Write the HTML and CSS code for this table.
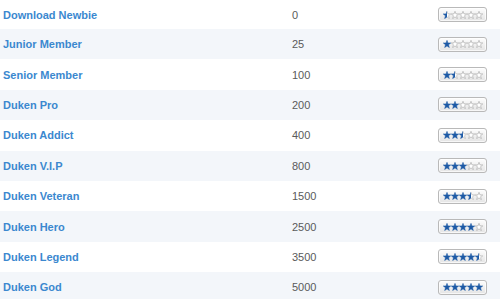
FILE: index.html
```html
<!DOCTYPE html>
<html>
<head>
<meta charset="utf-8">
<link rel="stylesheet" href="styles.css">
</head>
<body>
<svg class="defs" width="0" height="0" aria-hidden="true">
  <defs>
    <linearGradient id="halfFill" x1="0" x2="1" y1="0" y2="0">
      <stop offset="0.5" stop-color="#1d5aa6"/>
      <stop offset="0.5" stop-color="#ffffff"/>
    </linearGradient>
    <linearGradient id="halfStroke" x1="0" x2="1" y1="0" y2="0">
      <stop offset="0.5" stop-color="#1d5aa6"/>
      <stop offset="0.5" stop-color="#a9a9a9"/>
    </linearGradient>
    <symbol id="star" viewBox="0 0 10 10">
      <polygon points="5,0.4 6.2,3.6 9.7,3.7 6.95,5.9 7.95,9.5 5,7.4 2.05,9.5 3.05,5.9 0.3,3.7 3.8,3.6"/>
    </symbol>
  </defs>
</svg>
<table class="ranks">
  <tbody id="rows"></tbody>
</table>
<script src="script.js"></script>
</body>
</html>
```
FILE: styles.css
```css
html, body {
  margin: 0;
  padding: 0;
  background: #ffffff;
}
.defs {
  position: absolute;
  width: 0;
  height: 0;
}
.ranks {
  width: 500px;
  border-collapse: collapse;
  font-family: "Liberation Sans", Arial, sans-serif;
  font-size: 11px;
}
.ranks tr {
  height: 30.4px;
}
.ranks tr:first-child {
  height: 29px;
}
.ranks tr:nth-child(even) {
  background: #f3f6fa;
}
.ranks td {
  padding: 0;
  vertical-align: middle;
}
.name {
  width: 289px;
  padding-left: 3px !important;
  color: #3b88cf;
  font-weight: bold;
}
.posts {
  color: #5a5a5a;
  width: 146px;
}
.badge {
  display: flex;
  align-items: center;
  justify-content: center;
  width: 49px;
  height: 15px;
  box-sizing: border-box;
  border: 1px solid #b9b9b9;
  border-radius: 3px;
  background: linear-gradient(#fdfdfd, #e4e4e4);
  box-shadow: inset 0 0 0 1px rgba(255, 255, 255, 0.7);
}
.badge svg {
  width: 8px;
  height: 8px;
  display: block;
}
.full {
  fill: #1d5aa6;
  stroke: #1d5aa6;
  stroke-width: 0.6;
}
.empty {
  fill: #ffffff;
  stroke: #a9a9a9;
  stroke-width: 0.8;
}
.half {
  fill: url(#halfFill);
  stroke: url(#halfStroke);
  stroke-width: 0.7;
}
```
FILE: script.js
```js
var data = [
  ["Download Newbie", "0"],
  ["Junior Member", "25"],
  ["Senior Member", "100"],
  ["Duken Pro", "200"],
  ["Duken Addict", "400"],
  ["Duken V.I.P", "800"],
  ["Duken Veteran", "1500"],
  ["Duken Hero", "2500"],
  ["Duken Legend", "3500"],
  ["Duken God", "5000"]
];
var tbody = document.getElementById("rows");
data.forEach(function (d, i) {
  var rating = (i + 1) / 2;
  var stars = "";
  for (var s = 0; s < 5; s++) {
    var cls = rating >= s + 1 ? "full" : (rating > s ? "half" : "empty");
    stars += '<svg class="' + cls + '"><use href="#star"/></svg>';
  }
  var tr = document.createElement("tr");
  tr.innerHTML = '<td class="name">' + d[0] + '</td><td class="posts">' + d[1] +
    '</td><td class="stars"><div class="badge">' + stars + '</div></td>';
  tbody.appendChild(tr);
});
```
